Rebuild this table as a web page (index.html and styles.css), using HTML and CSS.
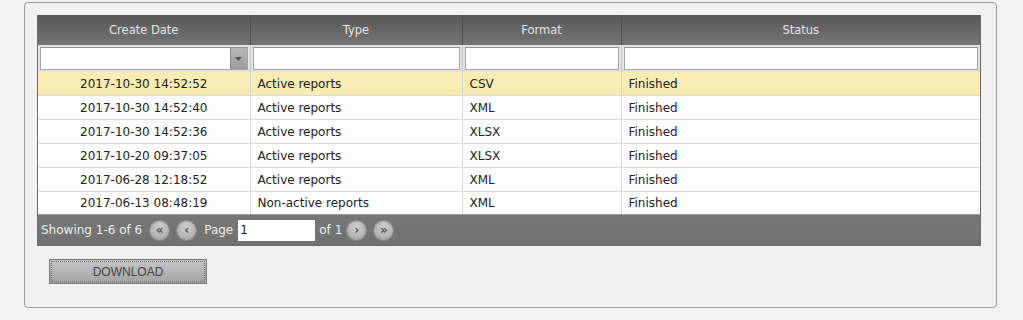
FILE: index.html
```html
<!DOCTYPE html>
<html lang="en">
<head>
<meta charset="utf-8">
<title>Export jobs</title>
<link rel="stylesheet" href="styles.css">
</head>
<body>
<div class="panel">
  <div class="grid">
    <table class="jobs">
      <colgroup>
        <col class="c-date"><col class="c-type"><col class="c-format"><col class="c-status">
      </colgroup>
      <thead>
        <tr class="head">
          <th>Create Date</th><th>Type</th><th>Format</th><th>Status</th>
        </tr>
        <tr class="filters">
          <td><div class="select"><span class="select-box"></span><span class="select-arrow"><svg width="7" height="4" viewBox="0 0 7 4"><path d="M0 0h7L3.5 4z" fill="#555"/></svg></span></div></td>
          <td><input class="filter" type="text"></td>
          <td><input class="filter" type="text"></td>
          <td><input class="filter" type="text"></td>
        </tr>
      </thead>
      <tbody>
        <tr class="selected"><td class="date">2017-10-30 14:52:52</td><td>Active reports</td><td>CSV</td><td>Finished</td></tr>
        <tr><td class="date">2017-10-30 14:52:40</td><td>Active reports</td><td>XML</td><td>Finished</td></tr>
        <tr><td class="date">2017-10-30 14:52:36</td><td>Active reports</td><td>XLSX</td><td>Finished</td></tr>
        <tr><td class="date">2017-10-20 09:37:05</td><td>Active reports</td><td>XLSX</td><td>Finished</td></tr>
        <tr><td class="date">2017-06-28 12:18:52</td><td>Active reports</td><td>XML</td><td>Finished</td></tr>
        <tr class="last"><td class="date">2017-06-13 08:48:19</td><td>Non-active reports</td><td>XML</td><td>Finished</td></tr>
      </tbody>
    </table>
    <div class="pager">
      <span class="info">Showing 1-6 of 6</span>
      <span class="pbtn">&laquo;</span>
      <span class="pbtn">&lsaquo;</span>
      <span class="label">Page</span>
      <input class="page" type="text" value="1">
      <span class="label">of 1</span>
      <span class="pbtn">&rsaquo;</span>
      <span class="pbtn">&raquo;</span>
    </div>
  </div>
  <button class="download" type="button">DOWNLOAD</button>
</div>
</body>
</html>
```

FILE: styles.css
```css
html, body {
  margin: 0;
  padding: 0;
  background: #f2f2f2;
}

body {
  font-family: "DejaVu Sans", Verdana, sans-serif;
  font-size: 12px;
  color: #222;
}

.panel {
  box-sizing: border-box;
  margin: 2px 0 0 24px;
  width: 973px;
  height: 306px;
  padding: 12px 14px 0 12px;
  border: 1px solid #9c9c9c;
  border-radius: 4px;
  background: #f1f1f1;
}

.grid {
  width: 944px;
  border: 1px solid #6a6a6a;
  border-top: 0;
  box-sizing: border-box;
}

.jobs {
  width: 100%;
  table-layout: fixed;
  border-collapse: collapse;
}

.c-date { width: 212px; }
.c-type { width: 212px; }
.c-format { width: 159px; }
.c-status { width: auto; }

.head th {
  height: 30px;
  padding: 0;
  font-weight: normal;
  font-size: 11.5px;
  color: #e4e4e4;
  background: linear-gradient(#585858, #747474);
  border-left: 1px solid #8a8a8a;
  border-right: 1px solid #4e4e4e;
  text-align: center;
}

.head th:first-child { border-left: 0; }
.head th:last-child { border-right: 0; }

.filters td {
  height: 27px;
  padding: 0 2px;
  background: #e2e2e2;
  border-left: 1px solid #c8c8c8;
  vertical-align: middle;
}

.filters td:first-child { border-left: 0; }

.filter {
  display: block;
  box-sizing: border-box;
  width: 100%;
  height: 23px;
  margin: 0;
  border: 1px solid #a5a5a5;
  border-top-color: #8f8f8f;
  background: #fff;
}

.select {
  display: flex;
  height: 23px;
  box-sizing: border-box;
  border: 1px solid #a5a5a5;
  border-top-color: #8f8f8f;
  background: #fff;
}

.select-box { flex: 1; }

.select-arrow {
  width: 16px;
  display: flex;
  align-items: center;
  justify-content: center;
  background: linear-gradient(#b8b8b8, #9c9c9c);
  border-left: 1px solid #8a8a8a;
}

tbody td {
  height: 23px;
  padding: 0 0 0 7px;
  border-bottom: 1px solid #d9d9d9;
  border-left: 1px solid #d2d2d2;
  background: #fff;
  white-space: nowrap;
  vertical-align: middle;
}

tbody td:first-child { border-left: 0; }

tbody td.date {
  padding: 0;
  text-align: center;
}

tbody tr.selected td { background: #fbebb4; }
tbody tr.last td { border-bottom: 0; height: 22px; }

.pager {
  display: flex;
  align-items: center;
  height: 31px;
  padding-left: 3px;
  background: linear-gradient(#777, #717171);
  border-top: 1px solid #9a9a9a;
  color: #ececec;
  box-sizing: border-box;
}

.pager .info { margin-right: 8px; }

.pbtn {
  width: 19px;
  height: 19px;
  margin-right: 8px;
  border-radius: 50%;
  background: radial-gradient(circle at 50% 35%, #cfcfcf, #a0a0a0);
  box-shadow: 0 0 0 1px #8a8a8a;
  color: #555;
  font-family: "DejaVu Sans", sans-serif;
  font-weight: bold;
  font-size: 12px;
  line-height: 18px;
  text-align: center;
}

.pager .label { margin-right: 5px; }

.page {
  box-sizing: border-box;
  width: 77px;
  height: 21px;
  margin: 0 4px 0 0;
  padding: 0 2px;
  border: 0;
  background: #fff;
  font-family: "DejaVu Sans", sans-serif;
  font-size: 12px;
  color: #222;
}

.download {
  display: block;
  margin: 13px 0 0 12px;
  width: 158px;
  height: 25px;
  border: 1px solid #7a7a7a;
  outline: 1px dotted #6d6d6d;
  outline-offset: -3px;
  background: linear-gradient(#c6c6c6, #a3a3a3);
  color: #444;
  font-family: "Liberation Sans", Arial, sans-serif;
  font-size: 12px;
  padding: 0;
}
```
